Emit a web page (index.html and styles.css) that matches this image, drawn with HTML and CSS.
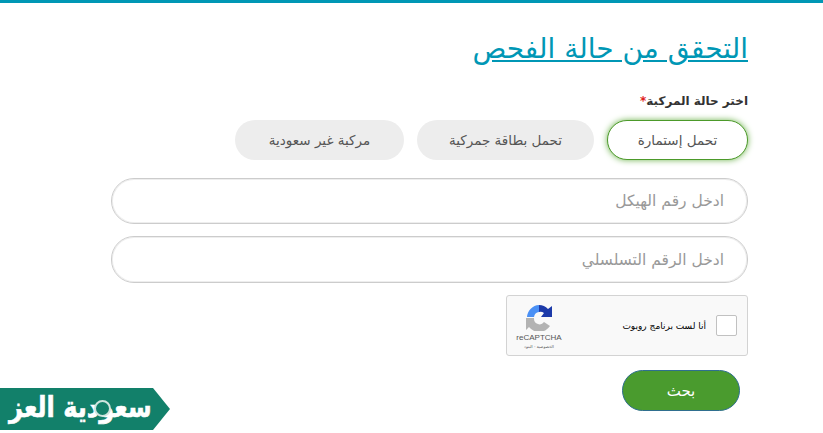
FILE: index.html
```html
<!DOCTYPE html>
<html lang="ar" dir="rtl">
<head>
    <meta charset="UTF-8">
    <meta name="viewport" content="width=device-width, initial-scale=1.0">
    <title>التحقق من حالة الفحص</title>
    <link rel="stylesheet" href="styles.css">
</head>
<body>
    <div class="container">
        <h1><a href="#">التحقق من حالة الفحص</a></h1>
        <form id="check-form">
            <label class="field-label">اختر حالة المركبة<span class="req">*</span></label>
            <div class="options">
                <button type="button" class="option active">تحمل إستمارة</button>
                <button type="button" class="option">تحمل بطاقة جمركية</button>
                <button type="button" class="option">مركبة غير سعودية</button>
            </div>
            <input type="text" class="text-input" placeholder="ادخل رقم الهيكل">
            <input type="text" class="text-input" placeholder="ادخل الرقم التسلسلي">
            <div class="captcha">
                <span class="captcha-box"></span>
                <span class="captcha-text">أنا لست برنامج روبوت</span>
                <div class="captcha-logo">
                    <svg width="26" height="26" viewBox="0 0 26 26">
                        <path d="M13 0 A13 13 0 0 1 22 4 L26 1 L26 12 L15 12 L18 8 A6 6 0 0 0 13 7 Z" fill="#1c3aa9"/>
                        <path d="M13 0 A13 13 0 0 0 1 12 L8 12 A6 6 0 0 1 13 7 Z" fill="#4a90f5"/>
                        <path d="M0 13 L8 13 L8 14 A5.5 5.5 0 0 0 18 17 L24 21 A13 13 0 0 1 3 22 L0 25 Z" fill="#b3b3b3"/>
                    </svg>
                    <span class="captcha-name">reCAPTCHA</span>
                    <span class="captcha-links">الخصوصية - البنود</span>
                </div>
            </div>
            <button type="submit" class="submit-btn">بحث</button>
        </form>
    </div>
    <div class="site-logo">
        <svg class="site-logo-bg" width="170" height="42" viewBox="0 0 170 42">
            <polygon points="0,0 153,0 170,21 153,42 0,42" fill="#12806a"/>
        </svg>
        <span class="site-logo-text">سعودية العز</span>
        <span class="site-logo-seal"></span>
    </div>
</body>
</html>
```

FILE: styles.css
```css
* {
    box-sizing: border-box;
}
body {
    font-family: "DejaVu Sans", sans-serif;
    background-color: #fff;
    margin: 0;
    height: 433px;
    overflow: hidden;
    border-top: 3px solid #0097b5;
    position: relative;
}
.container {
    width: 637px;
    margin-right: 75px;
    padding-top: 24px;
}
h1 {
    margin: 0 0 21px;
    font-size: 28px;
    font-weight: normal;
    line-height: 44px;
}
h1 a {
    color: #0097b5;
}
.field-label {
    display: block;
    font-size: 12px;
    font-weight: bold;
    color: #333;
    line-height: 18px;
    margin-bottom: 10px;
}
.req {
    color: #e02020;
}
.options {
    display: flex;
    gap: 13px;
    margin-bottom: 18px;
}
.option {
    width: 141px;
    height: 40px;
    border: none;
    border-radius: 20px;
    background-color: #ededed;
    color: #555;
    font-family: inherit;
    font-size: 13.5px;
    padding: 0;
}
.option:nth-child(2) {
    width: 177px;
}
.option:nth-child(3) {
    width: 169px;
}
.option.active {
    background-color: #fff;
    border: 1px solid #4c9a2a;
    box-shadow: 0 0 6px #6fb34f;
}
.text-input {
    display: block;
    width: 100%;
    height: 46px;
    border: 1px solid #ccc;
    box-shadow: inset 0 0 0 1px #eee;
    border-radius: 23px;
    padding: 0 23px;
    margin-bottom: 12px;
    font-family: inherit;
    font-size: 15.5px;
    color: #555;
    background-color: #fff;
}
.text-input + .text-input {
    height: 47px;
}
.text-input::placeholder {
    color: #999;
}
.captcha {
    display: flex;
    align-items: center;
    width: 242px;
    height: 61px;
    background-color: #f9f9f9;
    border: 1px solid #d3d3d3;
    border-radius: 3px;
    padding: 0 10px;
    margin-bottom: 14px;
}
.captcha-box {
    width: 21px;
    height: 21px;
    background-color: #fff;
    border: 1px solid #c1c1c1;
    border-radius: 2px;
    margin-left: 10px;
}
.captcha-text {
    font-size: 9px;
    color: #000;
    flex: 1;
}
.captcha-logo {
    width: 46px;
    display: flex;
    flex-direction: column;
    align-items: center;
    margin-left: -1px;
    margin-top: 4px;
}
.captcha-name {
    font-family: "Liberation Sans", sans-serif;
    font-size: 8px;
    color: #555;
    line-height: 11px;
    margin-top: 1px;
}
.captcha-links {
    font-size: 4px;
    color: #555;
    line-height: 7px;
}
.submit-btn {
    display: block;
    width: 118px;
    height: 41px;
    margin-right: 8px;
    border: 1px solid #2f6f8f;
    border-radius: 21px;
    background-color: #4a9b2e;
    color: #fff;
    font-family: inherit;
    font-size: 15px;
}
.site-logo {
    position: absolute;
    left: 0;
    bottom: 3px;
    width: 170px;
    height: 42px;
}
.site-logo-bg {
    display: block;
}
.site-logo-text {
    position: absolute;
    left: 9px;
    top: -2px;
    color: #fff;
    font-size: 29px;
    font-weight: bold;
    line-height: 42px;
    white-space: nowrap;
    transform: scaleX(0.83);
    transform-origin: left center;
    -webkit-text-stroke: 0.6px #fff;
}
.site-logo-seal {
    position: absolute;
    left: 94px;
    top: 12px;
    width: 17px;
    height: 17px;
    border-radius: 50%;
    background-color: #12806a;
    border: 2px solid #cfe5df;
}
```
